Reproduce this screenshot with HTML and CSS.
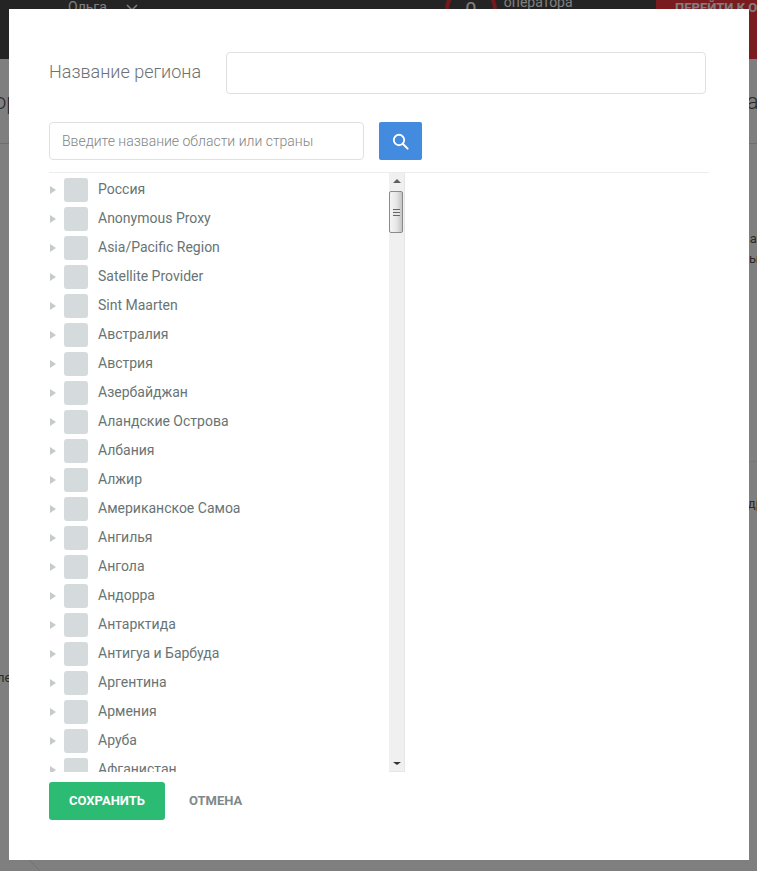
FILE: index.html
```html
<!DOCTYPE html>
<html lang="ru">
<head>
<meta charset="utf-8">
<title>Название региона</title>
<link rel="stylesheet" href="styles.css">
</head>
<body>
<div class="page">
  <header class="topbar">
    <span class="user">Ольга</span>
    <svg class="user-chevron" width="12" height="8" viewBox="0 0 12 8"><path d="M1 1l5 5 5-5" fill="none" stroke="#fff" stroke-width="1.5"/></svg>
    <span class="ring">0</span>
    <span class="operator">оператора</span>
    <span class="go">ПЕРЕЙТИ К ОПЛАТЕ</span>
  </header>
  <div class="title-row"><span class="frag-title left">ор</span><span class="frag-title right">ас</span></div>
  <div class="frag-row first"><span></span><span class="frag end-a">ат</span></div>
  <div class="frag-row second"><span></span><span class="frag end-b">ы</span></div>
  <div class="divider"></div>
  <div class="frag-row third"><span></span><span class="frag end-a">др</span></div>
  <div class="frag-row fourth"><span class="frag start">ле</span><span></span></div>
  <svg class="corner-line" width="12" height="11" viewBox="0 0 12 11"><path d="M0 0l11 11" fill="none" stroke="#e2e2e2" stroke-width="1"/></svg>
</div>
<div class="overlay"></div>
<main class="modal">
  <div class="name-row">
    <label class="name-label" for="region">Название региона</label>
    <input class="name-input" id="region" type="text">
  </div>
  <div class="search-row">
    <input class="search-input" type="text" placeholder="Введите название области или страны">
    <button class="search-btn" type="button" aria-label="Поиск">
      <svg width="17" height="17" viewBox="0 0 17 17"><circle cx="7" cy="7" r="5.2" fill="none" stroke="#fff" stroke-width="1.9"/><path d="M11 11l4.6 4.6" fill="none" stroke="#fff" stroke-width="2" stroke-linecap="round"/></svg>
    </button>
  </div>
  <div class="tree-wrap">
    <div class="tree">
      <ul class="tree-list">
        <li class="node"><i class="arrow"></i><i class="check"></i><span>Россия</span></li>
        <li class="node"><i class="arrow"></i><i class="check"></i><span>Anonymous Proxy</span></li>
        <li class="node"><i class="arrow"></i><i class="check"></i><span>Asia/Pacific Region</span></li>
        <li class="node"><i class="arrow"></i><i class="check"></i><span>Satellite Provider</span></li>
        <li class="node"><i class="arrow"></i><i class="check"></i><span>Sint Maarten</span></li>
        <li class="node"><i class="arrow"></i><i class="check"></i><span>Австралия</span></li>
        <li class="node"><i class="arrow"></i><i class="check"></i><span>Австрия</span></li>
        <li class="node"><i class="arrow"></i><i class="check"></i><span>Азербайджан</span></li>
        <li class="node"><i class="arrow"></i><i class="check"></i><span>Аландские Острова</span></li>
        <li class="node"><i class="arrow"></i><i class="check"></i><span>Албания</span></li>
        <li class="node"><i class="arrow"></i><i class="check"></i><span>Алжир</span></li>
        <li class="node"><i class="arrow"></i><i class="check"></i><span>Американское Самоа</span></li>
        <li class="node"><i class="arrow"></i><i class="check"></i><span>Ангилья</span></li>
        <li class="node"><i class="arrow"></i><i class="check"></i><span>Ангола</span></li>
        <li class="node"><i class="arrow"></i><i class="check"></i><span>Андорра</span></li>
        <li class="node"><i class="arrow"></i><i class="check"></i><span>Антарктида</span></li>
        <li class="node"><i class="arrow"></i><i class="check"></i><span>Антигуа и Барбуда</span></li>
        <li class="node"><i class="arrow"></i><i class="check"></i><span>Аргентина</span></li>
        <li class="node"><i class="arrow"></i><i class="check"></i><span>Армения</span></li>
        <li class="node"><i class="arrow"></i><i class="check"></i><span>Аруба</span></li>
        <li class="node"><i class="arrow"></i><i class="check"></i><span>Афганистан</span></li>
      </ul>
      <div class="scrollbar">
        <i class="sb-up"></i>
        <div class="sb-thumb"><i class="sb-grip"></i></div>
        <i class="sb-down"></i>
      </div>
    </div>
  </div>
  <div class="actions">
    <button class="save" type="button">СОХРАНИТЬ</button>
    <button class="cancel" type="button">ОТМЕНА</button>
  </div>
</main>
</body>
</html>
```
FILE: styles.css
```css
* { box-sizing: border-box; }
html, body { margin: 0; height: 100%; overflow: hidden; }
body { font-family: Roboto, "Liberation Sans", sans-serif; background: #fff; }

.page { height: 871px; overflow: hidden; color: #555; }
.topbar { height: 59px; background: #474847; display: flex; align-items: flex-start; color: #fff; overflow: hidden; }
.user { margin: -2px 0 0 68px; font-size: 14px; line-height: 18px; }
.user-chevron { margin: 4px 0 0 19px; }
.ring { width: 52px; height: 52px; margin: -16px 0 0 307px; flex: none; border: 4px solid #e8323a; border-radius: 50%; display: flex; align-items: center; justify-content: center; font-size: 20px; }
.operator { margin: -7px 0 0 7px; font-size: 14px; line-height: 18px; }
.go { margin-left: auto; width: 101px; height: 59px; flex: none; background: #f5393f; padding: 0 0 0 19px; font-size: 13px; font-weight: 700; line-height: 16px; white-space: nowrap; overflow: hidden; }
.title-row { height: 85px; display: flex; justify-content: space-between; align-items: flex-start; padding-top: 30px; border-bottom: 1px solid #ddd; overflow: hidden; }
.frag-title { font-size: 22px; line-height: 26px; font-weight: 300; white-space: nowrap; }
.frag-title.left { margin-left: -6px; }
.frag-title.right { margin-right: -13px; }
.frag-row { display: flex; justify-content: space-between; font-size: 13px; line-height: 18px; height: 18px; }
.frag-row.first { margin-top: 86px; }
.frag-row.second { margin-top: 2px; }
.divider { margin: 193px 0 0 700px; height: 1px; background: #eee; }
.frag-row.third { margin-top: 33px; }
.frag-row.fourth { margin-top: 156px; }
.frag { white-space: nowrap; }
.frag.end-a { margin-right: -6px; }
.frag.end-b { margin-right: -2px; }
.frag.start { margin-left: -3px; }
.corner-line { display: block; margin: 173px 0 0 29px; }

.overlay { position: fixed; inset: 0; background: rgba(0, 0, 0, .5); }

.modal { position: fixed; left: 9px; top: 9px; width: 740px; height: 851px; background: #fff; padding: 43px 40px 0; }
.name-row { display: flex; align-items: center; }
.name-label { width: 177px; flex: none; padding-bottom: 3px; font-size: 18px; font-weight: 300; color: #6c7272; }
.name-input { width: 480px; height: 42px; border: 1px solid #dfe1e1; border-radius: 4px; background: #fff; outline: none; }
.search-row { display: flex; margin-top: 28px; }
.search-input { width: 315px; height: 38px; border: 1px solid #dfe1e1; border-radius: 4px; padding: 0 12px; font: 300 14px Roboto, "Liberation Sans", sans-serif; outline: none; }
.search-input::placeholder { color: #808585; opacity: 1; }
.search-btn { width: 43px; height: 38px; margin-left: 15px; border: 0; border-radius: 2px; background: #428bdf; padding: 0 1px 0 0; display: flex; align-items: center; justify-content: center; }
.tree-wrap { margin-top: 12px; width: 660px; border-top: 1px solid #ebeded; }
.tree { width: 356px; height: 599px; display: flex; overflow: hidden; }
.tree-list { list-style: none; margin: 0; padding: 5px 0 0 1px; width: 340px; flex: none; }
.node { height: 29px; display: flex; align-items: flex-start; font-size: 14px; line-height: 22px; color: #687474; white-space: nowrap; }
.arrow { width: 0; height: 0; margin: 8px 8px 0 0; border-left: 6px solid #c5caca; border-top: 4px solid transparent; border-bottom: 4px solid transparent; }
.check { width: 24px; height: 24px; border-radius: 3px; background: #d5dadc; margin-right: 10px; flex: none; }
.scrollbar { width: 16px; flex: none; background: #f0f0f0; border: 1px solid #e6e6e6; border-width: 0 1px 1px 0; display: flex; flex-direction: column; align-items: center; padding-top: 6px; }
.sb-up { width: 0; height: 0; border-left: 4px solid transparent; border-right: 4px solid transparent; border-bottom: 4px solid #606060; flex: none; }
.sb-thumb { width: 14px; height: 42px; margin-top: 8px; margin-right: 1px; border: 1px solid #8a8a8a; border-radius: 2px; background: linear-gradient(90deg, #f4f4f4 0%, #e8e8e8 50%, #c4c4c4 100%); display: flex; align-items: center; justify-content: center; flex: none; }
.sb-grip { width: 7px; height: 7px; background: repeating-linear-gradient(180deg, #666 0 1px, #e4e4e4 1px 3px); }
.sb-down { width: 0; height: 0; margin-top: auto; margin-bottom: 6px; border-left: 4px solid transparent; border-right: 4px solid transparent; border-top: 3px solid #333; flex: none; }

.actions { display: flex; align-items: center; margin-top: 10px; }
.save { width: 116px; height: 38px; border: 0; border-radius: 3px; background: #2bbb73; color: #fff; font: 700 13px Roboto, "Liberation Sans", sans-serif; padding: 0 0 2px; }
.cancel { margin-left: 24px; border: 0; background: none; padding: 0 0 2px; color: #7e8a8a; font: 700 13px Roboto, "Liberation Sans", sans-serif; }
```
